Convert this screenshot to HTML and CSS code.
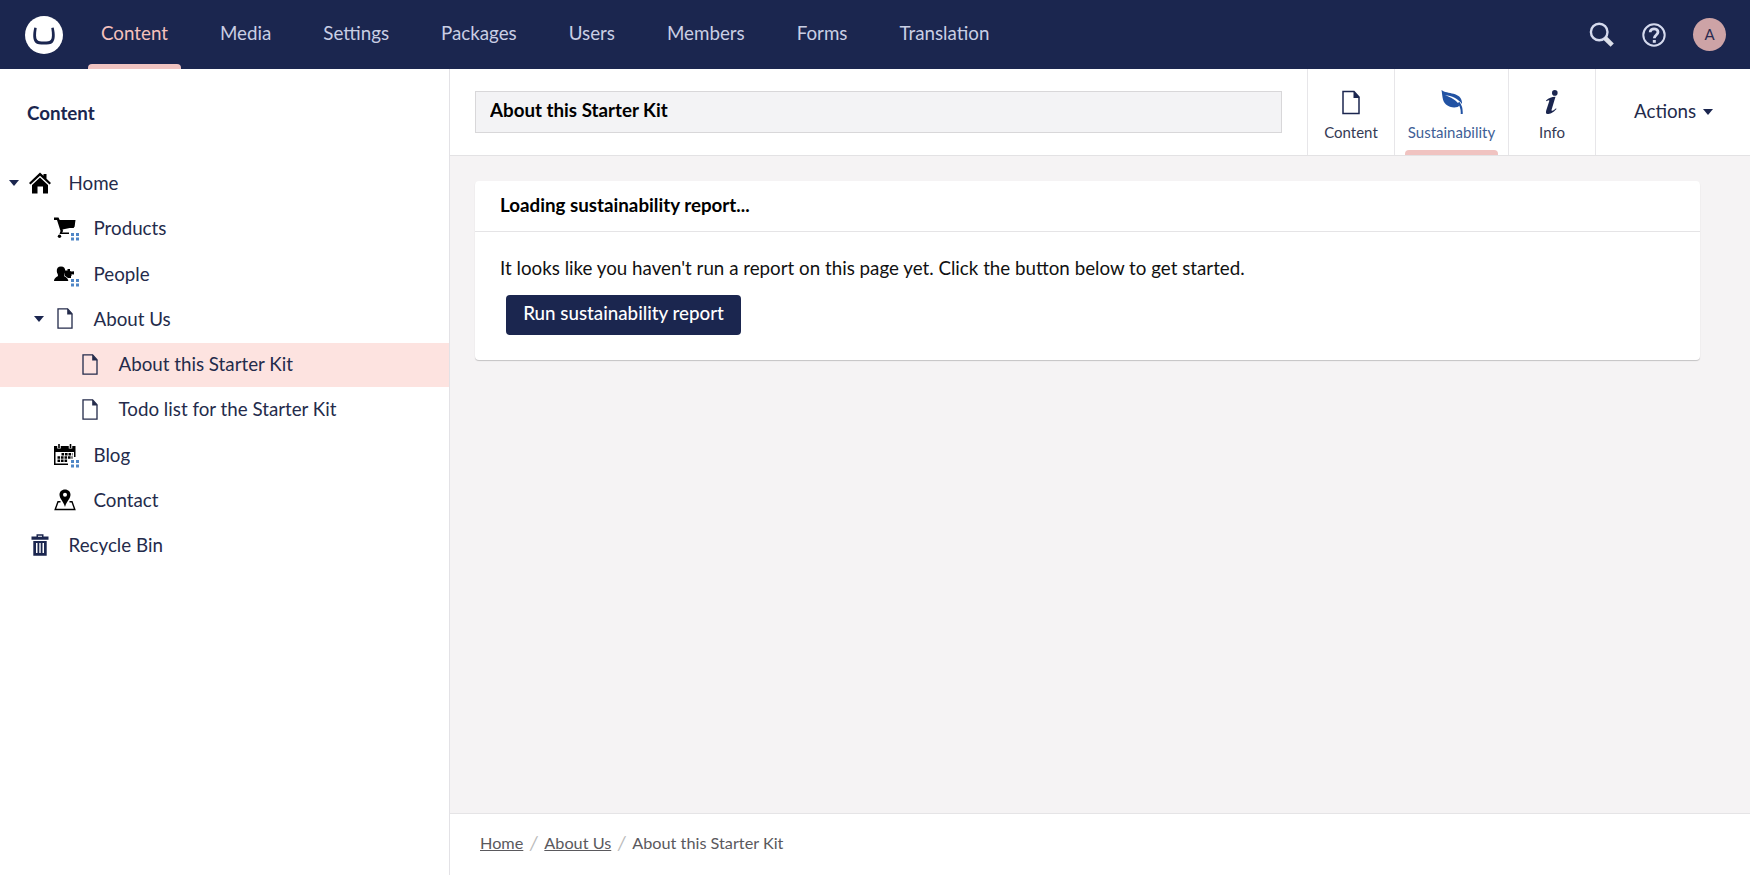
FILE: index.html
```html
<!DOCTYPE html>
<html lang="en">
<head>
<meta charset="utf-8">
<title>Content - About this Starter Kit</title>
<link rel="stylesheet" href="styles.css">
</head>
<body>
<svg class="defs" aria-hidden="true">
  <symbol id="doc" viewBox="0 0 18 24"><path d="M1 1h11l5 5.5V23H1z" fill="none" stroke="currentColor" stroke-width="1.5"/><path d="M11.5.5l6 7h-6z" fill="currentColor"/></symbol>
  <symbol id="dots" viewBox="0 0 8 8"><path d="M0 0h3v3H0zM5 0h3v3H5zM0 4.600h3v3H0zM5 4.600h3v3H5z" fill="#4f86c6"/></symbol>
</svg>
<header class="topbar">
  <svg class="logo" viewBox="0 0 38 38"><circle cx="19" cy="19" r="19" fill="#fff"/><path d="M9.300 11.600C7.600 19 8 24 10.200 26.400C12 28.400 15.500 28.600 19 28.600S26 28.400 27.800 26.400C30 24 30.400 19 28.700 11.600L26.300 11.900C27.300 18 27.200 22 25.900 23.800C24.800 25.300 22.300 25.500 19 25.500S13.200 25.300 12.100 23.800C10.800 22 10.700 18 11.700 11.900z" fill="#1b264f"/></svg>
  <nav class="sections">
    <a class="section active">Content</a><a class="section">Media</a><a class="section">Settings</a><a class="section">Packages</a><a class="section">Users</a><a class="section">Members</a><a class="section">Forms</a><a class="section">Translation</a>
  </nav>
  <div class="tools">
    <svg class="search" viewBox="0 0 25 25"><circle cx="10.200" cy="10" r="8.300" fill="none" stroke="#d5daee" stroke-width="2.400"/><path d="M16 16l7.200 7.200" stroke="#dcdfe9" stroke-width="4.600"/></svg>
    <svg class="help" viewBox="0 0 24 24"><circle cx="12" cy="12" r="10.700" fill="none" stroke="#d5daee" stroke-width="2"/><path d="M8.200 9.300C8.200 4.600 16 4.800 16 9.100C16 12 12.300 12 12.300 15.300" fill="none" stroke="#d5daee" stroke-width="2.800"/><path d="M10.800 17h3v2.800h-3z" fill="#d5daee"/></svg>
    <span class="avatar">A</span>
  </div>
</header>
<div class="main">
  <aside class="sidebar">
    <h1 class="tree-title">Content</h1>
    <ul class="tree">
      <li class="row"><i class="caret"></i><svg class="icon" viewBox="0 0 22 22"><path d="M11 .5l3.500 3.300V2h3v4.700L22 11l-1.500 1.500L11 3.700 1.500 12.500 0 11z"/><path d="M11 5.600l8 7.300V21.500h-5v-7H8.500v7H3v-8.600z"/></svg><span>Home</span></li>
      <li class="row level-2"><i class="caret none"></i><svg class="icon" viewBox="0 0 22 22"><path d="M0 .5h4.500l1.200 2.500H21.500l-1 7-12 2.500.6 1.500-1 1.500H15v1.600H5.500l1-3L3 3H0z"/><path d="M5 3.500h16l-1.200 7.500H8z"/><circle cx="5.500" cy="19.200" r="1.700"/></svg><svg class="badge"><use href="#dots"/></svg><span>Products</span></li>
      <li class="row level-2"><i class="caret none"></i><svg class="icon" viewBox="0 0 22 22"><path d="M7 3.500c3 0 4.400 2 4.200 4.800C11 10.500 10 11 10 12.500c0 1.500 4 1.500 4.300 5.500H0c.2-4 4-4 4-5.500C4 11 3 10.500 2.800 8.300C2.600 5.500 4 3.500 7 3.500z"/><path d="M10.500 7.500h3V6H16v2l1.500.5 2.500-.3v3.300l-2.500-.2V13H17v2h-3l-3.500-2.500z"/></svg><svg class="badge"><use href="#dots"/></svg><span>People</span></li>
      <li class="row level-2"><i class="caret"></i><svg class="icon doc"><use href="#doc"/></svg><span>About Us</span></li>
      <li class="row level-3 selected"><i class="caret none"></i><svg class="icon doc"><use href="#doc"/></svg><span>About this Starter Kit</span></li>
      <li class="row level-3"><i class="caret none"></i><svg class="icon doc"><use href="#doc"/></svg><span>Todo list for the Starter Kit</span></li>
      <li class="row level-2"><i class="caret none"></i><svg class="icon" viewBox="0 0 22 22"><path d="M0 2h21.500v11H20V8H1.500v11.500H14V21H0z"/><path d="M5 0v4.500M16.500 0v4.500" stroke="#fff" stroke-width="3.500"/><path d="M5 0v4M16.500 0v4" stroke="#000" stroke-width="1.600"/><path d="M7.500 10.200h11M3.500 13.500h15M3.500 16.800h10" stroke="#000" stroke-width="2.600" stroke-dasharray="2.600 .9"/></svg><svg class="badge"><use href="#dots"/></svg><span>Blog</span></li>
      <li class="row level-2"><i class="caret none"></i><svg class="icon" viewBox="0 0 22 22"><path fill-rule="evenodd" d="M11 .5c3.300 0 5.500 2.300 5.500 5.300C16.500 9.500 12.800 12 11 18 9.200 12 5.500 9.500 5.500 5.800 5.500 2.800 7.700.5 11 .5zm0 3.300a2 2 0 1 0 0 4 2 2 0 0 0 0-4z"/><path d="M6.500 12.800H4L1.200 20.500h19.600L18 12.800h-2.500" fill="none" stroke="#000" stroke-width="1.400"/></svg><span>Contact</span></li>
      <li class="row"><i class="caret none"></i><svg class="icon bin" viewBox="0 0 22 22"><path d="M2.500 2.500h5V.3h7v2.200h5v3.200h-17zM9 1.700v1h4v-1z" fill-rule="evenodd"/><path fill-rule="evenodd" d="M4.300 7h13.400v14.800H4.300zM7 9v10h1.500V9zm3.300 0v10h1.400V9zm3.200 0v10H15V9z"/></svg><span>Recycle Bin</span></li>
    </ul>
  </aside>
  <main class="editor">
    <div class="editor-head">
      <input class="name" type="text" value="About this Starter Kit" aria-label="Name">
      <div class="apps">
        <a class="app"><svg class="app-doc"><use href="#doc"/></svg><span>Content</span></a>
        <a class="app wide current"><svg viewBox="0 0 24 24"><path d="M1.500 0C7 4.500 21.500 1.500 22 12.500L22 14C18 8.500 12 6 5 5C11 7.500 17 10 19.500 15.500C18 18 10.500 18.500 6 14.500C2 11 2.500 5 1.500 0z" fill="currentColor"/><path d="M18.500 12.500C21 15.500 22 19 21.700 24" fill="none" stroke="currentColor" stroke-width="2"/></svg><span>Sustainability</span></a>
        <a class="app"><svg viewBox="0 0 24 24"><circle cx="14.800" cy="2.900" r="2.800" fill="currentColor"/><path d="M6 10.500C9 8 12 6.700 15.500 6.800L11.500 20C11.200 21.500 13 21 16 18.200L16.500 19C13 23 10 24 7.500 24C5.800 24 5.700 22.500 6.200 20.500L9.300 11C9.500 9.800 8.500 10 6.500 11.300z" fill="currentColor"/></svg><span>Info</span></a>
        <a class="actions">Actions<i class="caret"></i></a>
      </div>
    </div>
    <div class="workspace">
      <section class="card">
        <h2>Loading sustainability report...</h2>
        <div class="card-body">
          <p>It looks like you haven't run a report on this page yet. Click the button below to get started.</p>
          <button type="button">Run sustainability report</button>
        </div>
      </section>
    </div>
    <footer class="crumbs"><a>Home</a><i>/</i><a>About Us</a><i>/</i><span>About this Starter Kit</span></footer>
  </main>
</div>
</body>
</html>
```
FILE: styles.css
```css
* { box-sizing: border-box; }
body {
  margin: 0;
  height: 875px;
  overflow: hidden;
  display: flex;
  flex-direction: column;
  background: #fff;
  color: #242b4b;
  font: 18.75px/25px Lato, sans-serif;
}
.defs { position: absolute; width: 0; height: 0; }
.topbar {
  flex: none;
  height: 69px;
  display: flex;
  align-items: center;
  padding: 0 24px 0 25px;
  background: #1b264f;
}
.logo { width: 38px; height: 38px; }
.sections { display: flex; align-self: stretch; margin-left: 12px; }
.section {
  position: relative;
  padding: 0 26px;
  line-height: 65px;
  color: #c9cee4;
}
.section.active { color: #f5c1bc; }
.section.active::after {
  content: "";
  position: absolute;
  left: 13px;
  right: 13px;
  bottom: 0;
  height: 5px;
  border-radius: 4px 4px 0 0;
  background: #f0c3c1;
}
.tools { display: flex; align-items: center; margin-left: auto; }
.search { width: 25px; height: 25px; margin-right: 28px; }
.help { width: 24px; height: 24px; margin-right: 27px; }
.avatar {
  width: 33px;
  height: 33px;
  border-radius: 50%;
  background: #cda3a6;
  color: #2b2b50;
  font-size: 15px;
  line-height: 32px;
  text-align: center;
}
.main { flex: 1; display: flex; min-height: 0; }
.sidebar { flex: none; width: 450px; border-right: 1px solid #e3e2e6; }
.tree-title { margin: 31px 0 0 27px; font-size: 18.75px; line-height: 25px; font-weight: 700; color: #1b264f; }
.tree { margin: 37px 0 0; padding: 0; list-style: none; }
.row {
  position: relative;
  display: flex;
  align-items: center;
  height: 44.250px;
  margin-bottom: 1px;
  padding: 0 0 2px 9px;
}
.row span { margin-top: -1px; }
.level-2 { padding-left: 34px; }
.level-3 { padding-left: 59px; }
.selected { background: #fde3e0; }
.caret {
  flex: none;
  border: 5px solid transparent;
  border-top: 6px solid #1b264f;
  border-bottom: 0;
}
.none { visibility: hidden; }
.icon { flex: none; width: 22px; height: 22px; margin: 0 17.500px 0 10px; fill: #000; }
.icon.doc { width: 16px; height: 21px; margin: 0 20.500px 0 13px; }
.icon.bin { fill: #1b264f; }
.badge { position: absolute; left: 71px; top: 26px; width: 8px; height: 8px; }
.editor { flex: 1; display: flex; flex-direction: column; min-width: 0; background: #f5f3f4; }
.editor-head {
  flex: none;
  height: 87px;
  display: flex;
  align-items: center;
  padding-left: 25px;
  background: #fff;
  border-bottom: 1px solid #e3e2e4;
}
.name {
  flex: 1;
  height: 42px;
  padding: 0 14px 5px;
  border: 1px solid #d8d7d9;
  background: #f3f3f5;
  color: #000;
  font: 700 18.75px Lato, sans-serif;
}
.apps { display: flex; align-self: stretch; margin-left: 25px; }
.app {
  position: relative;
  width: 87px;
  display: flex;
  flex-direction: column;
  align-items: center;
  padding-top: 21px;
  border-left: 1px solid #e7e6e9;
  font-size: 15px;
  line-height: 20px;
  color: #343a54;
}
.app svg { width: 24px; height: 24px; margin-bottom: 8px; color: #1b264f; }
.app .app-doc { width: 18px; height: 25px; margin-bottom: 7px; }
.app.wide { width: 114px; }
.app.current { color: #3f5f97; }
.app.current svg { color: #2152a3; }
.current::after {
  content: "";
  position: absolute;
  left: 10px;
  right: 10px;
  bottom: 0;
  height: 5px;
  border-radius: 4px 4px 0 0;
  background: #f0c3c1;
}
.actions {
  width: 155px;
  display: flex;
  align-items: center;
  padding: 0 0 3px 38px;
  border-left: 1px solid #e7e6e9;
}
.actions .caret { margin: 3px 0 0 7px; }
.workspace { flex: 1; padding: 25px 50px 0 25px; }
.card { height: 179px; border-radius: 4px; background: #fff; box-shadow: 0 1px 1px rgba(0, 0, 0, .2); color: #000; }
.card h2 {
  margin: 0;
  height: 51px;
  padding: 0 25px;
  border-bottom: 1px solid #e5e4e6;
  font-size: 18.75px;
  line-height: 47px;
  font-weight: 700;
}
.card-body { padding: 23px 25px; }
.card p { margin: 0 0 15px; color: #111; }
.card button {
  display: block;
  width: 235px;
  height: 40px;
  margin-left: 6px;
  padding: 0 0 5px;
  border: 0;
  border-radius: 4px;
  background: #1b264f;
  color: #fff;
  font: 500 18.75px Lato, sans-serif;
}
.crumbs {
  flex: none;
  height: 62px;
  display: flex;
  align-items: center;
  padding: 0 0 4px 30px;
  border-top: 1px solid #e5e4e6;
  background: #fff;
  color: #5a595d;
  font-size: 16.250px;
}
.crumbs a { text-decoration: underline; }
.crumbs i { width: 21px; text-align: center; font-size: 19px; color: #bbb; }
```
